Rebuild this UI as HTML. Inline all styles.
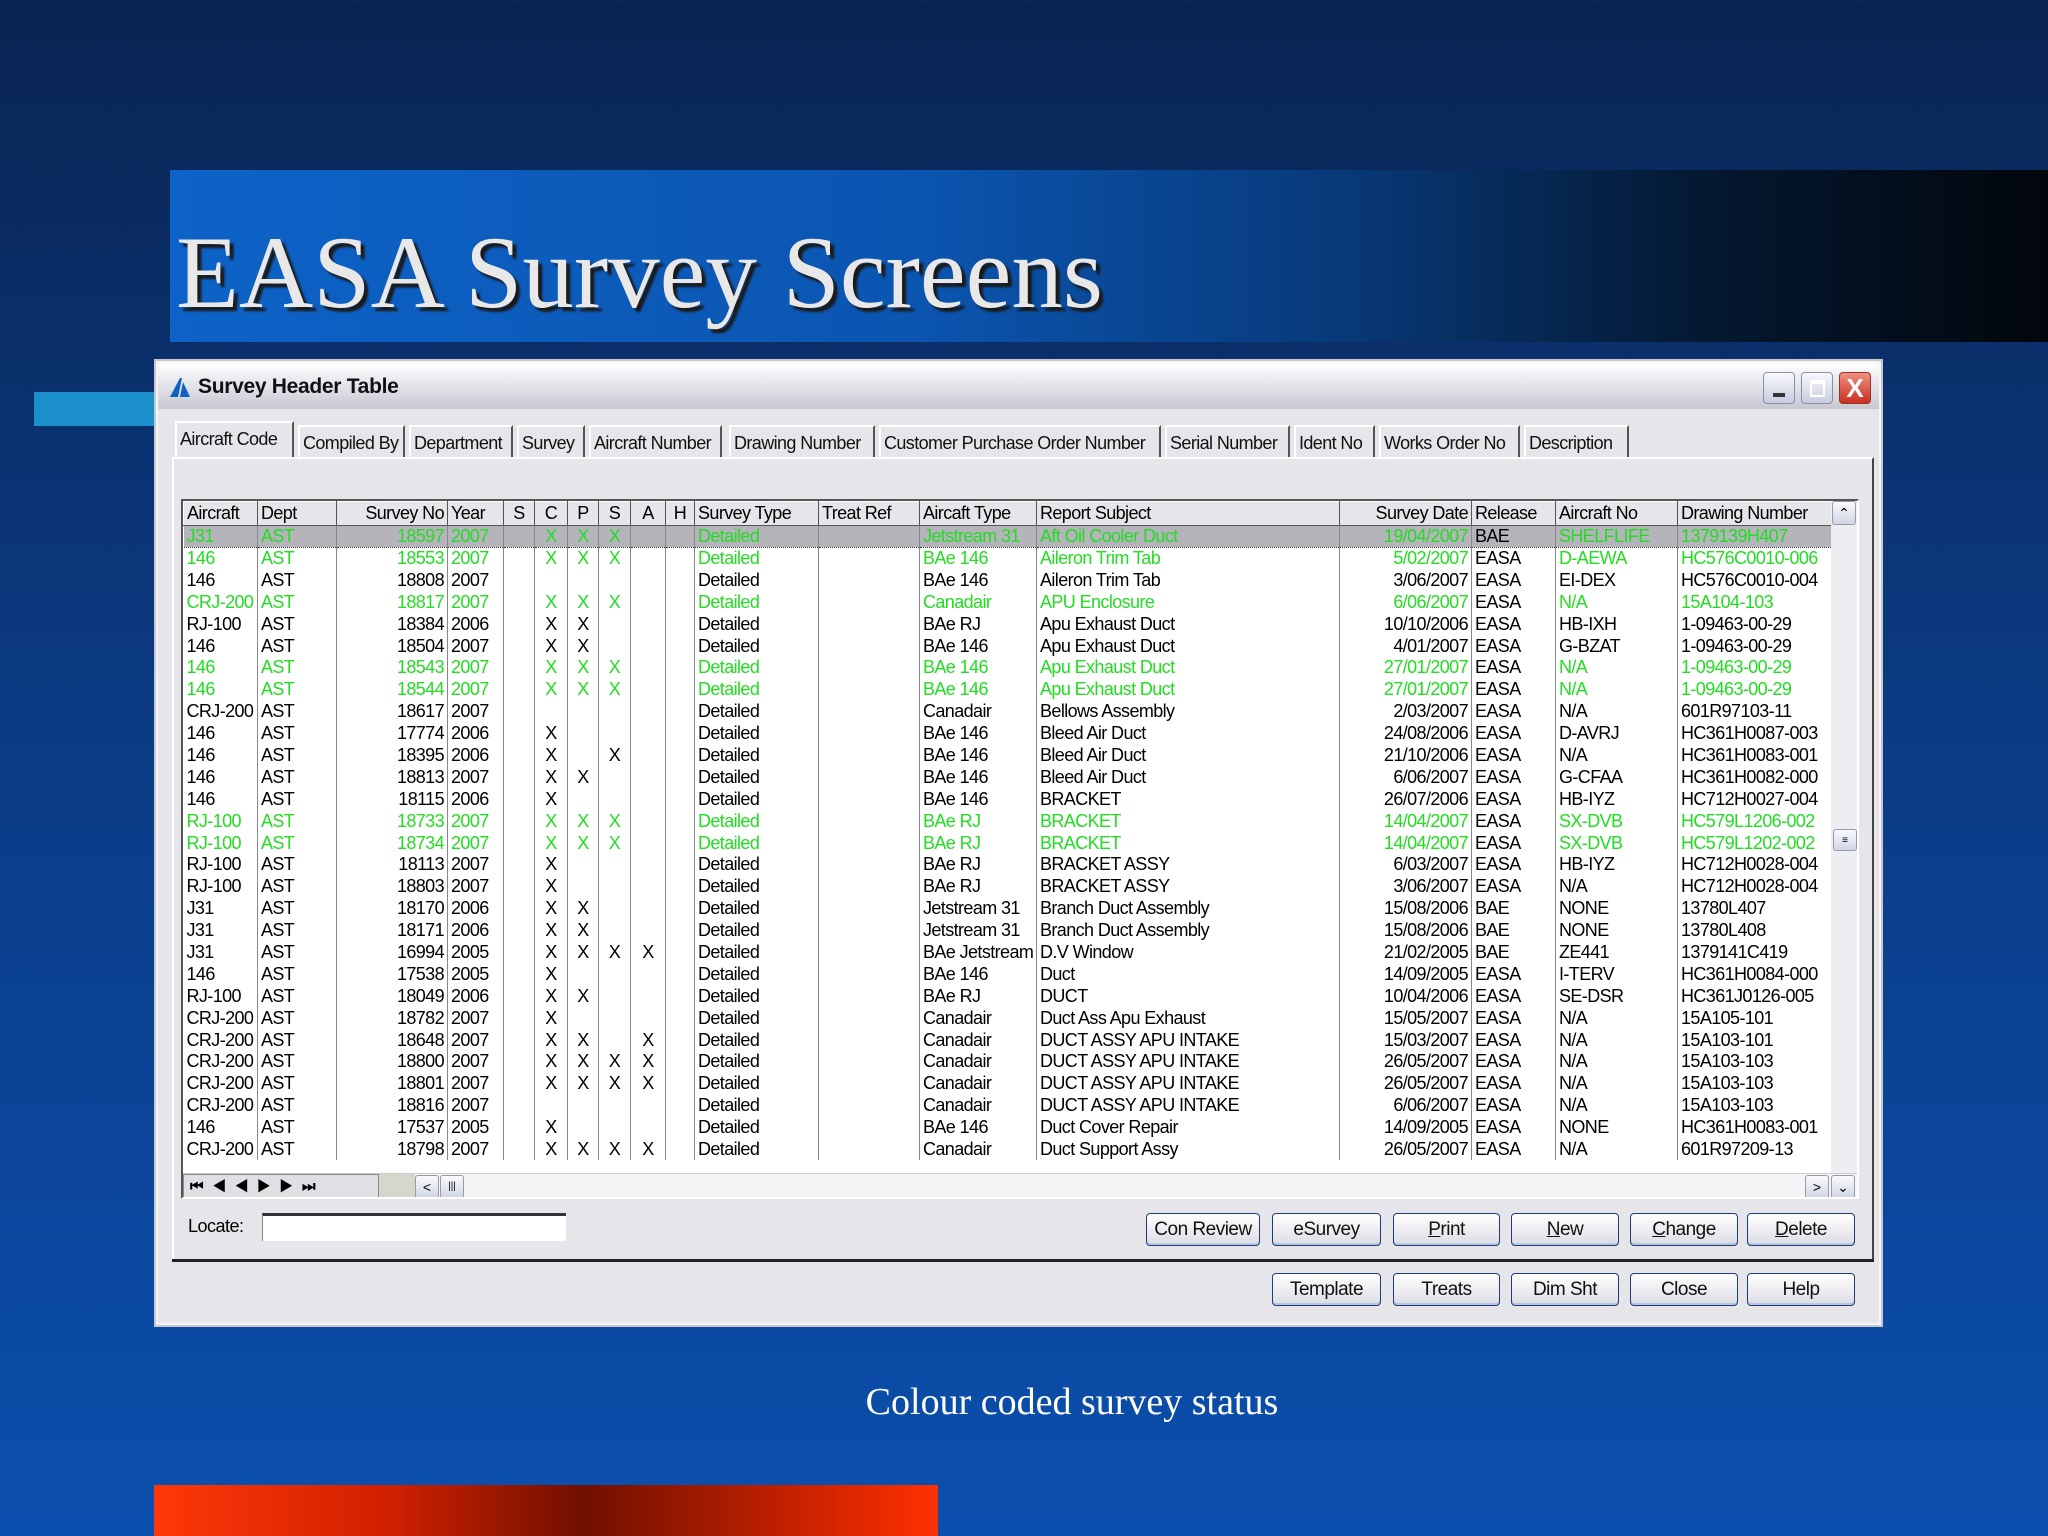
<!DOCTYPE html>
<html><head><meta charset="utf-8"><style>
*{margin:0;padding:0;box-sizing:border-box}
body{width:2048px;height:1536px;overflow:hidden;position:relative;background:linear-gradient(180deg,#0a2452 0%,#0b3a82 45%,#0b4fae 100%);font-family:"Liberation Sans Narrow","Liberation Sans",sans-serif}
.abs{position:absolute}
#banner{left:170px;top:170px;width:1878px;height:172px;background:linear-gradient(90deg,#0d63c8 0%,#0b55b0 40%,#083a7a 62%,#041830 82%,#02060c 100%)}
#title{left:176px;top:222px;font-family:"Liberation Serif",serif;font-size:103px;color:#e8e8e8;text-shadow:4px 4px 2px #1a1a1a;white-space:nowrap;line-height:1}
#lbar{left:34px;top:392px;width:122px;height:34px;background:#1b8fcb}
#red{left:154px;top:1485px;width:784px;height:51px;background:linear-gradient(90deg,#ff3808 0%,#d02000 30%,#701000 55%,#c02000 80%,#ff3000 100%)}
#cap{left:0;width:2144px;top:1380px;text-align:center;font-family:"Liberation Serif",serif;font-size:38px;color:#fff}
#win{left:154px;top:359px;width:1729px;height:968px;background:#e6e6ea;border:2px solid #c8c8cc;box-shadow:inset 0 0 0 2px #f4f4f6}
#tb{left:2px;top:2px;right:2px;height:46px;background:linear-gradient(180deg,#ffffff 0%,#e8e8ee 40%,#c8c8d2 100%)}
#tt{left:40px;top:12px;font-family:"Liberation Sans",sans-serif;font-weight:bold;font-size:21px;color:#111;letter-spacing:-0.3px}
.wb{top:9px;width:32px;height:32px;border-radius:4px;border:1px solid #8890a8;background:linear-gradient(#f8f8fc,#c8cce0)}
#panel{left:16px;top:96px;width:1702px;height:804px;border:2px solid #fff;border-right-color:#444;border-bottom-color:#444}
.tab{position:absolute;top:64px;height:32px;font-size:18px;letter-spacing:-0.6px;color:#111;padding:6px 0 0 3px;white-space:nowrap;overflow:hidden;border-left:2px solid #fff;border-right:2px solid #555;border-top:2px solid #fff;background:#e6e6ea}
#grid{left:25px;top:138px;width:1678px;height:700px;border:2px solid #555;border-right-color:#fff;border-bottom-color:#fff;background:#fff;overflow:hidden}
table{position:absolute;left:0;top:0;border-collapse:collapse;table-layout:fixed;width:1648px;font-size:18px;letter-spacing:-0.6px}
td,th{height:21.9px;padding:0 3px;white-space:nowrap;overflow:hidden;border-right:1px solid #888;line-height:21px;font-weight:normal;color:#000}
th{height:24px;background:#e6e6ea;border:1px solid #555;border-top-color:#fff;border-left-color:#fff;text-align:left}
.r{text-align:right}.c{text-align:center;padding:0}
tr.g td{color:#22dd22}
tr.sel td{background:#b4b4ba;border-top:1px dotted #333;border-bottom:1px dotted #333}
#vs{left:1648px;top:0;width:26px;height:672px;background:#eeeef2}
.sb{position:absolute;width:24px;height:24px;border:1px solid #99a;background:linear-gradient(#fafafe,#d0d4e4);border-radius:3px;font-size:14px;text-align:center;line-height:22px}
#nav{left:0;top:672px;width:1676px;height:26px;background:#f4f4f6;border-top:1px solid #ccc}
.btn{position:absolute;height:33px;border:1px solid #1c3c7c;border-radius:4px;background:linear-gradient(#ffffff,#dcdce4);font-size:19px;letter-spacing:-0.5px;text-align:center;line-height:31px;color:#111;box-shadow:inset 0 -2px 0 #b8c4e0}
</style></head><body>
<div id="banner" class="abs"></div>
<div id="title" class="abs">EASA Survey Screens</div>
<div id="lbar" class="abs"></div>
<div id="win" class="abs">
 <div id="tb" class="abs">
  <svg class="abs" style="left:10px;top:13px" width="24" height="22"><path d="M2 21 L12 2 L14 2 L10 21Z M12 21 L15 6 L22 21Z" fill="#1060c0"/></svg>
  <div id="tt" class="abs">Survey Header Table</div>
  <div class="abs wb" style="left:1605px"><div class="abs" style="left:9px;top:20px;width:12px;height:4px;background:#333"></div></div>
  <div class="abs wb" style="left:1643px"><div class="abs" style="left:8px;top:7px;width:15px;height:17px;border:2px solid #fff;border-top-width:4px"></div></div>
  <div class="abs wb" style="left:1681px;background:linear-gradient(#f09080,#c83020);border-color:#a03020;color:#fff;font:bold 26px 'Liberation Sans',sans-serif;text-align:center;line-height:30px">X</div>
 </div>
 <div class="tab" style="left:19px;width:119px;top:60px;height:38px">Aircraft Code</div>
 <div class="tab" style="left:142px;width:107px">Compiled By</div>
 <div class="tab" style="left:253px;width:104px">Department</div>
 <div class="tab" style="left:361px;width:68px">Survey</div>
 <div class="tab" style="left:433px;width:133px">Aircraft Number</div>
 <div class="tab" style="left:573px;width:146px">Drawing Number</div>
 <div class="tab" style="left:723px;width:282px">Customer Purchase Order Number</div>
 <div class="tab" style="left:1009px;width:125px">Serial Number</div>
 <div class="tab" style="left:1138px;width:81px">Ident No</div>
 <div class="tab" style="left:1223px;width:141px">Works Order No</div>
 <div class="tab" style="left:1368px;width:105px">Description</div>
 <div id="panel" class="abs"></div>
 <div id="grid" class="abs">
 <table>
 <colgroup><col style="width:74px"><col style="width:79px"><col style="width:111px"><col style="width:56px"><col style="width:31px"><col style="width:33px"><col style="width:31px"><col style="width:32px"><col style="width:35px"><col style="width:29px"><col style="width:124px"><col style="width:101px"><col style="width:117px"><col style="width:303px"><col style="width:132px"><col style="width:84px"><col style="width:122px"><col style="width:154px"></colgroup>
 <tr><th>Aircraft</th><th>Dept</th><th class="r">Survey No</th><th>Year</th><th class="c">S</th><th class="c">C</th><th class="c">P</th><th class="c">S</th><th class="c">A</th><th class="c">H</th><th>Survey Type</th><th>Treat Ref</th><th>Aircaft Type</th><th>Report Subject</th><th class="r">Survey Date</th><th>Release</th><th>Aircraft No</th><th>Drawing Number</th></tr>
 <tr class="g sel"><td>J31</td><td>AST</td><td class="r">18597</td><td>2007</td><td></td><td class="c">X</td><td class="c">X</td><td class="c">X</td><td></td><td></td><td>Detailed</td><td></td><td>Jetstream 31</td><td>Aft Oil Cooler Duct</td><td class="r">19/04/2007</td><td style="color:#000">BAE</td><td>SHELFLIFE</td><td>1379139H407</td></tr>
 <tr class="g"><td>146</td><td>AST</td><td class="r">18553</td><td>2007</td><td></td><td class="c">X</td><td class="c">X</td><td class="c">X</td><td></td><td></td><td>Detailed</td><td></td><td>BAe 146</td><td>Aileron Trim Tab</td><td class="r">5/02/2007</td><td style="color:#000">EASA</td><td>D-AEWA</td><td>HC576C0010-006</td></tr>
 <tr><td>146</td><td>AST</td><td class="r">18808</td><td>2007</td><td></td><td></td><td></td><td></td><td></td><td></td><td>Detailed</td><td></td><td>BAe 146</td><td>Aileron Trim Tab</td><td class="r">3/06/2007</td><td>EASA</td><td>EI-DEX</td><td>HC576C0010-004</td></tr>
 <tr class="g"><td>CRJ-200</td><td>AST</td><td class="r">18817</td><td>2007</td><td></td><td class="c">X</td><td class="c">X</td><td class="c">X</td><td></td><td></td><td>Detailed</td><td></td><td>Canadair</td><td>APU Enclosure</td><td class="r">6/06/2007</td><td style="color:#000">EASA</td><td>N/A</td><td>15A104-103</td></tr>
 <tr><td>RJ-100</td><td>AST</td><td class="r">18384</td><td>2006</td><td></td><td class="c">X</td><td class="c">X</td><td></td><td></td><td></td><td>Detailed</td><td></td><td>BAe RJ</td><td>Apu Exhaust Duct</td><td class="r">10/10/2006</td><td>EASA</td><td>HB-IXH</td><td>1-09463-00-29</td></tr>
 <tr><td>146</td><td>AST</td><td class="r">18504</td><td>2007</td><td></td><td class="c">X</td><td class="c">X</td><td></td><td></td><td></td><td>Detailed</td><td></td><td>BAe 146</td><td>Apu Exhaust Duct</td><td class="r">4/01/2007</td><td>EASA</td><td>G-BZAT</td><td>1-09463-00-29</td></tr>
 <tr class="g"><td>146</td><td>AST</td><td class="r">18543</td><td>2007</td><td></td><td class="c">X</td><td class="c">X</td><td class="c">X</td><td></td><td></td><td>Detailed</td><td></td><td>BAe 146</td><td>Apu Exhaust Duct</td><td class="r">27/01/2007</td><td style="color:#000">EASA</td><td>N/A</td><td>1-09463-00-29</td></tr>
 <tr class="g"><td>146</td><td>AST</td><td class="r">18544</td><td>2007</td><td></td><td class="c">X</td><td class="c">X</td><td class="c">X</td><td></td><td></td><td>Detailed</td><td></td><td>BAe 146</td><td>Apu Exhaust Duct</td><td class="r">27/01/2007</td><td style="color:#000">EASA</td><td>N/A</td><td>1-09463-00-29</td></tr>
 <tr><td>CRJ-200</td><td>AST</td><td class="r">18617</td><td>2007</td><td></td><td></td><td></td><td></td><td></td><td></td><td>Detailed</td><td></td><td>Canadair</td><td>Bellows Assembly</td><td class="r">2/03/2007</td><td>EASA</td><td>N/A</td><td>601R97103-11</td></tr>
 <tr><td>146</td><td>AST</td><td class="r">17774</td><td>2006</td><td></td><td class="c">X</td><td></td><td></td><td></td><td></td><td>Detailed</td><td></td><td>BAe 146</td><td>Bleed Air Duct</td><td class="r">24/08/2006</td><td>EASA</td><td>D-AVRJ</td><td>HC361H0087-003</td></tr>
 <tr><td>146</td><td>AST</td><td class="r">18395</td><td>2006</td><td></td><td class="c">X</td><td></td><td class="c">X</td><td></td><td></td><td>Detailed</td><td></td><td>BAe 146</td><td>Bleed Air Duct</td><td class="r">21/10/2006</td><td>EASA</td><td>N/A</td><td>HC361H0083-001</td></tr>
 <tr><td>146</td><td>AST</td><td class="r">18813</td><td>2007</td><td></td><td class="c">X</td><td class="c">X</td><td></td><td></td><td></td><td>Detailed</td><td></td><td>BAe 146</td><td>Bleed Air Duct</td><td class="r">6/06/2007</td><td>EASA</td><td>G-CFAA</td><td>HC361H0082-000</td></tr>
 <tr><td>146</td><td>AST</td><td class="r">18115</td><td>2006</td><td></td><td class="c">X</td><td></td><td></td><td></td><td></td><td>Detailed</td><td></td><td>BAe 146</td><td>BRACKET</td><td class="r">26/07/2006</td><td>EASA</td><td>HB-IYZ</td><td>HC712H0027-004</td></tr>
 <tr class="g"><td>RJ-100</td><td>AST</td><td class="r">18733</td><td>2007</td><td></td><td class="c">X</td><td class="c">X</td><td class="c">X</td><td></td><td></td><td>Detailed</td><td></td><td>BAe RJ</td><td>BRACKET</td><td class="r">14/04/2007</td><td style="color:#000">EASA</td><td>SX-DVB</td><td>HC579L1206-002</td></tr>
 <tr class="g"><td>RJ-100</td><td>AST</td><td class="r">18734</td><td>2007</td><td></td><td class="c">X</td><td class="c">X</td><td class="c">X</td><td></td><td></td><td>Detailed</td><td></td><td>BAe RJ</td><td>BRACKET</td><td class="r">14/04/2007</td><td style="color:#000">EASA</td><td>SX-DVB</td><td>HC579L1202-002</td></tr>
 <tr><td>RJ-100</td><td>AST</td><td class="r">18113</td><td>2007</td><td></td><td class="c">X</td><td></td><td></td><td></td><td></td><td>Detailed</td><td></td><td>BAe RJ</td><td>BRACKET ASSY</td><td class="r">6/03/2007</td><td>EASA</td><td>HB-IYZ</td><td>HC712H0028-004</td></tr>
 <tr><td>RJ-100</td><td>AST</td><td class="r">18803</td><td>2007</td><td></td><td class="c">X</td><td></td><td></td><td></td><td></td><td>Detailed</td><td></td><td>BAe RJ</td><td>BRACKET ASSY</td><td class="r">3/06/2007</td><td>EASA</td><td>N/A</td><td>HC712H0028-004</td></tr>
 <tr><td>J31</td><td>AST</td><td class="r">18170</td><td>2006</td><td></td><td class="c">X</td><td class="c">X</td><td></td><td></td><td></td><td>Detailed</td><td></td><td>Jetstream 31</td><td>Branch Duct Assembly</td><td class="r">15/08/2006</td><td>BAE</td><td>NONE</td><td>13780L407</td></tr>
 <tr><td>J31</td><td>AST</td><td class="r">18171</td><td>2006</td><td></td><td class="c">X</td><td class="c">X</td><td></td><td></td><td></td><td>Detailed</td><td></td><td>Jetstream 31</td><td>Branch Duct Assembly</td><td class="r">15/08/2006</td><td>BAE</td><td>NONE</td><td>13780L408</td></tr>
 <tr><td>J31</td><td>AST</td><td class="r">16994</td><td>2005</td><td></td><td class="c">X</td><td class="c">X</td><td class="c">X</td><td class="c">X</td><td></td><td>Detailed</td><td></td><td>BAe Jetstream</td><td>D.V Window</td><td class="r">21/02/2005</td><td>BAE</td><td>ZE441</td><td>1379141C419</td></tr>
 <tr><td>146</td><td>AST</td><td class="r">17538</td><td>2005</td><td></td><td class="c">X</td><td></td><td></td><td></td><td></td><td>Detailed</td><td></td><td>BAe 146</td><td>Duct</td><td class="r">14/09/2005</td><td>EASA</td><td>I-TERV</td><td>HC361H0084-000</td></tr>
 <tr><td>RJ-100</td><td>AST</td><td class="r">18049</td><td>2006</td><td></td><td class="c">X</td><td class="c">X</td><td></td><td></td><td></td><td>Detailed</td><td></td><td>BAe RJ</td><td>DUCT</td><td class="r">10/04/2006</td><td>EASA</td><td>SE-DSR</td><td>HC361J0126-005</td></tr>
 <tr><td>CRJ-200</td><td>AST</td><td class="r">18782</td><td>2007</td><td></td><td class="c">X</td><td></td><td></td><td></td><td></td><td>Detailed</td><td></td><td>Canadair</td><td>Duct Ass Apu Exhaust</td><td class="r">15/05/2007</td><td>EASA</td><td>N/A</td><td>15A105-101</td></tr>
 <tr><td>CRJ-200</td><td>AST</td><td class="r">18648</td><td>2007</td><td></td><td class="c">X</td><td class="c">X</td><td></td><td class="c">X</td><td></td><td>Detailed</td><td></td><td>Canadair</td><td>DUCT ASSY APU INTAKE</td><td class="r">15/03/2007</td><td>EASA</td><td>N/A</td><td>15A103-101</td></tr>
 <tr><td>CRJ-200</td><td>AST</td><td class="r">18800</td><td>2007</td><td></td><td class="c">X</td><td class="c">X</td><td class="c">X</td><td class="c">X</td><td></td><td>Detailed</td><td></td><td>Canadair</td><td>DUCT ASSY APU INTAKE</td><td class="r">26/05/2007</td><td>EASA</td><td>N/A</td><td>15A103-103</td></tr>
 <tr><td>CRJ-200</td><td>AST</td><td class="r">18801</td><td>2007</td><td></td><td class="c">X</td><td class="c">X</td><td class="c">X</td><td class="c">X</td><td></td><td>Detailed</td><td></td><td>Canadair</td><td>DUCT ASSY APU INTAKE</td><td class="r">26/05/2007</td><td>EASA</td><td>N/A</td><td>15A103-103</td></tr>
 <tr><td>CRJ-200</td><td>AST</td><td class="r">18816</td><td>2007</td><td></td><td></td><td></td><td></td><td></td><td></td><td>Detailed</td><td></td><td>Canadair</td><td>DUCT ASSY APU INTAKE</td><td class="r">6/06/2007</td><td>EASA</td><td>N/A</td><td>15A103-103</td></tr>
 <tr><td>146</td><td>AST</td><td class="r">17537</td><td>2005</td><td></td><td class="c">X</td><td></td><td></td><td></td><td></td><td>Detailed</td><td></td><td>BAe 146</td><td>Duct Cover Repair</td><td class="r">14/09/2005</td><td>EASA</td><td>NONE</td><td>HC361H0083-001</td></tr>
 <tr><td>CRJ-200</td><td>AST</td><td class="r">18798</td><td>2007</td><td></td><td class="c">X</td><td class="c">X</td><td class="c">X</td><td class="c">X</td><td></td><td>Detailed</td><td></td><td>Canadair</td><td>Duct Support Assy</td><td class="r">26/05/2007</td><td>EASA</td><td>N/A</td><td>601R97209-13</td></tr>
 </table>
 <div id="vs" class="abs"><div class="sb" style="left:1px;top:0">&#8963;</div><div class="sb" style="left:2px;top:328px;height:22px;font-size:10px">&#8801;</div></div>
 <div id="nav" class="abs">
  <div class="abs" style="left:0;top:0;width:196px;height:26px;background:#e0e0e4;border:1px solid #888;font:bold 15px 'Liberation Sans',sans-serif;letter-spacing:9px;padding-left:6px;line-height:24px">⏮◀◀▶▶⏭</div>
  <div class="abs" style="left:196px;top:0;width:36px;height:26px;background:#d6d6cc"></div>
  <div class="sb" style="left:232px;top:1px">&lt;</div><div class="sb" style="left:257px;top:1px;font-size:10px">|||</div>
  <div class="sb" style="left:1622px;top:1px">&gt;</div><div class="sb" style="left:1648px;top:1px">&#8964;</div>
 </div>
 </div>
 <div class="abs" style="left:32px;top:855px;font-size:18px;letter-spacing:-0.5px">Locate:</div>
 <div class="abs" style="left:106px;top:852px;width:304px;height:28px;background:#fff;border-top:3px solid #333;border-left:1px solid #888"></div>
 <div class="abs" style="left:16px;top:898px;width:1702px;height:3px;background:#222"></div>
 <div class="btn" style="left:990px;top:852px;width:114px">Con Review</div>
 <div class="btn" style="left:1116px;top:852px;width:109px">eSurvey</div>
 <div class="btn" style="left:1237px;top:852px;width:107px"><u>P</u>rint</div>
 <div class="btn" style="left:1355px;top:852px;width:108px"><u>N</u>ew</div>
 <div class="btn" style="left:1474px;top:852px;width:108px"><u>C</u>hange</div>
 <div class="btn" style="left:1591px;top:852px;width:108px"><u>D</u>elete</div>
 <div class="btn" style="left:1116px;top:912px;width:109px">Template</div>
 <div class="btn" style="left:1237px;top:912px;width:107px">Treats</div>
 <div class="btn" style="left:1355px;top:912px;width:108px">Dim Sht</div>
 <div class="btn" style="left:1474px;top:912px;width:108px">Close</div>
 <div class="btn" style="left:1591px;top:912px;width:108px">Help</div>
</div>
<div id="cap" class="abs">Colour coded survey status</div>
<div id="red" class="abs"></div>
</body></html>
